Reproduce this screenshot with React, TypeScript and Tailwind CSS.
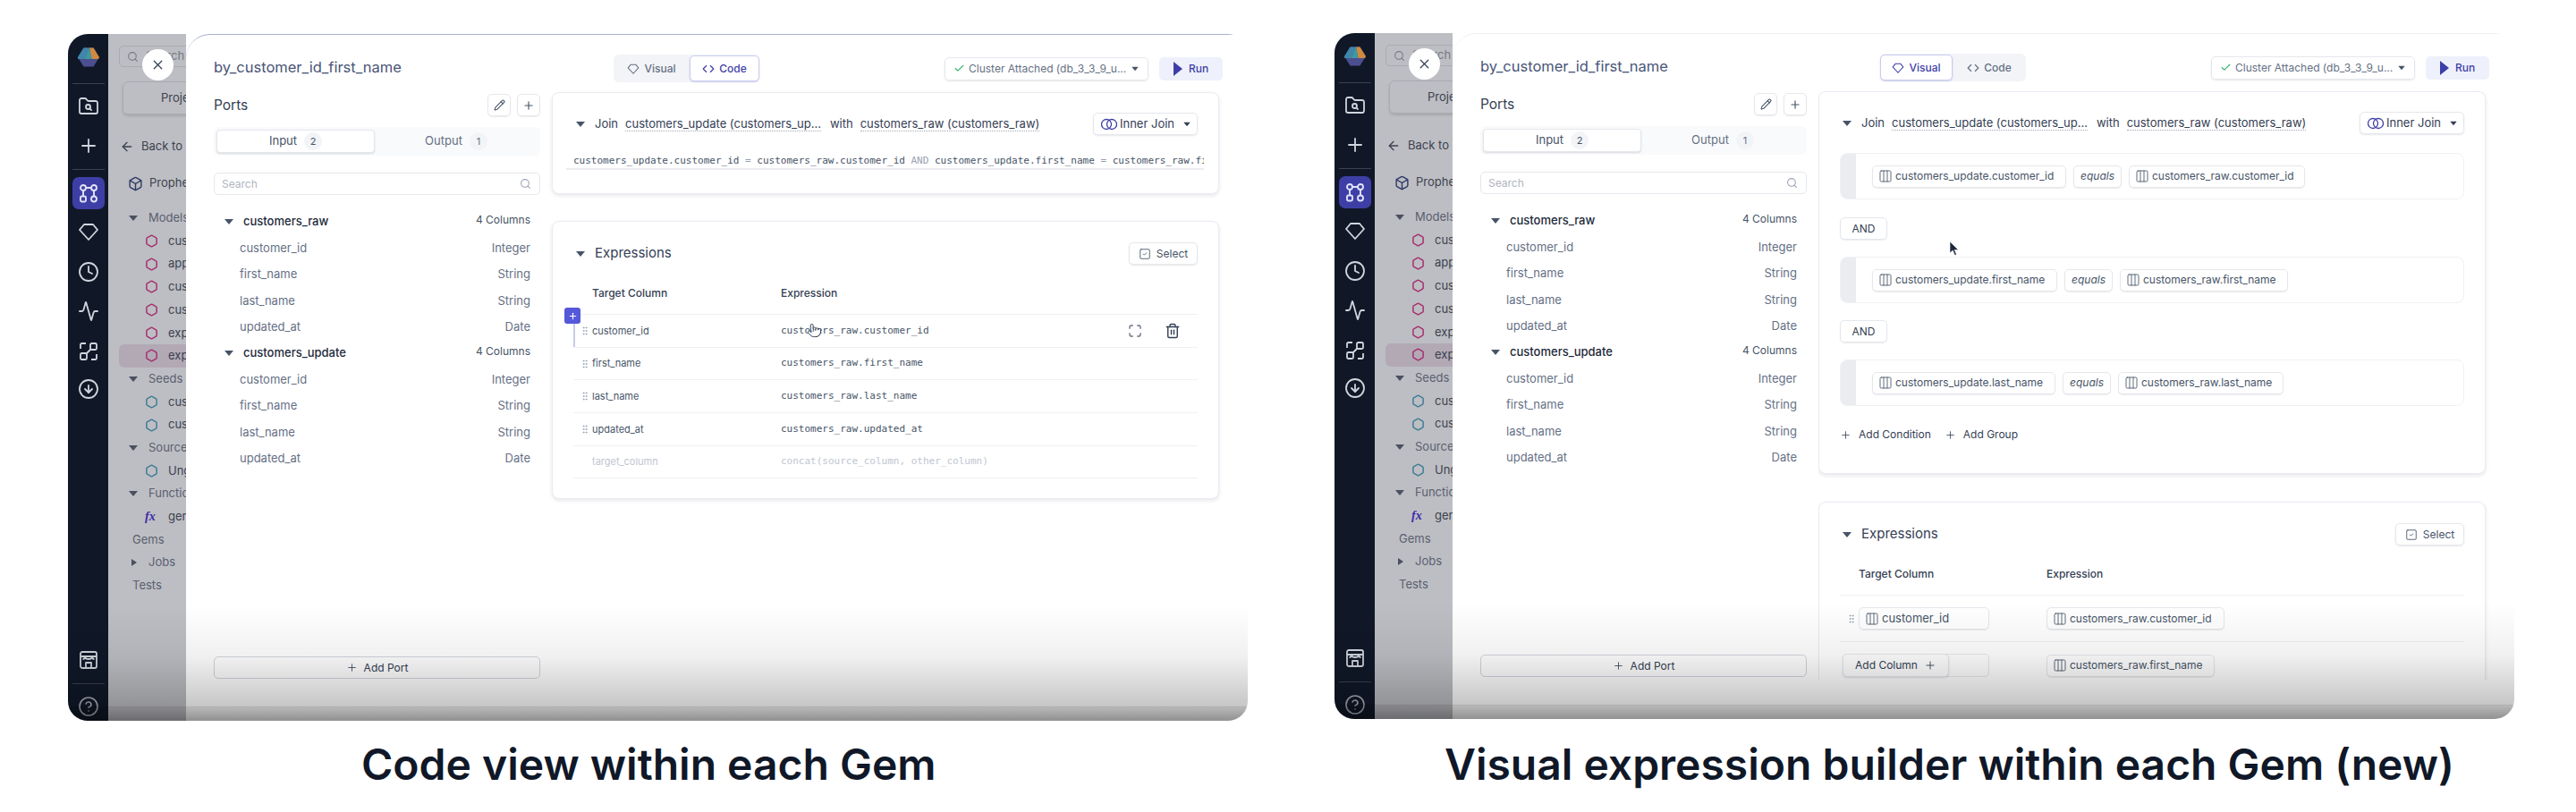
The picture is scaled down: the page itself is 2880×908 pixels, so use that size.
import React from "react";
import {
  X, Pencil, Plus, Search, ArrowLeft, Box, Hexagon, Check, Columns3, Trash2, GripVertical,
  Code, SquareCheck, Clock, Activity, CircleArrowDown, CircleHelp, FolderSearch2, Pointer,
} from "lucide-react";

const Caret = ({ right = false, className = "" }: { right?: boolean; className?: string }) => (
  <svg width="10" height="8" viewBox="0 0 10 8" className={`shrink-0 ${className}`}>
    {right ? <path d="M2 0 L8 4 L2 8 Z" fill="currentColor" /> : <path d="M0 1 H10 L5 7 Z" fill="currentColor" />}
  </svg>
);

const GemIcon = ({ className = "" }: { className?: string }) => (
  <svg width="24" height="24" viewBox="0 0 24 24" fill="none" stroke="currentColor" strokeWidth="1.8" strokeLinejoin="round" className={`shrink-0 ${className}`}>
    <path d="M7 4 H17 L22 10 L12 21 L2 10 Z" />
  </svg>
);

const FlowIcon = ({ className = "" }: { className?: string }) => (
  <svg width="24" height="24" viewBox="0 0 24 24" fill="none" stroke="currentColor" strokeWidth="1.9" className={className}>
    <circle cx="6" cy="6" r="3" />
    <circle cx="18" cy="6" r="3" />
    <rect x="3" y="15.5" width="6" height="6" rx="1.5" />
    <circle cx="18" cy="18.5" r="3" />
    <path d="M9 6 H15 M6 9 V15.5 M18 9 V15.5" />
  </svg>
);

const GraphIcon = ({ className = "" }: { className?: string }) => (
  <svg width="24" height="24" viewBox="0 0 24 24" fill="none" stroke="currentColor" strokeWidth="1.8" strokeLinejoin="round" className={`shrink-0 ${className}`}>
    <rect x="14" y="3" width="7" height="7" rx="1.5" />
    <rect x="3" y="14" width="7" height="7" rx="1.5" />
    <path d="M3 9 V4.5 A1.5 1.5 0 0 1 4.5 3 H9 M21 15 V19.5 A1.5 1.5 0 0 1 19.5 21 H15 M9 15 L15 9" />
  </svg>
);

const StoreIcon = ({ className = "" }: { className?: string }) => (
  <svg width="24" height="24" viewBox="0 0 24 24" fill="none" stroke="currentColor" strokeWidth="1.8" strokeLinejoin="round" className={`shrink-0 ${className}`}>
    <rect x="3" y="3" width="18" height="18" rx="2" />
    <path d="M3 8 H21 M8 8 Q8 11 5.5 11 M8 8 Q8 11 12 11 Q16 11 16 8 M16 8 Q16 11 18.5 11 M9 21 V15 H15 V21" />
  </svg>
);

const Logo = () => (
  <svg width="24" height="24" viewBox="0 0 24 24">
    <path d="M6.5 1.5 H17.5 L24 12 L17.5 22.5 H6.5 L0 12 Z" fill="#4b4f8f" />
    <path d="M6.5 1.5 H13 L9 12 L12 14 L0 14 L0 12 Z" fill="#3f86a8" />
    <path d="M13 1.5 H17.5 L24 12 L23 14 L15.5 14 Z" fill="#cf8a3f" />
    <path d="M13 1.5 L15.5 14 L8 14 Z" fill="#3f9a9f" />
  </svg>
);

const Divider = ({ mt }: { mt: string }) => <div className={`h-px w-9 bg-[#3a4150] shrink-0 ${mt}`} />;

const NavBar = () => (
  <div className="w-[45px] shrink-0 bg-[#101828] flex flex-col items-center text-[#d0d5dd]">
    <div className="mt-[14px]"><Logo /></div>
    <Divider mt="mt-[17px]" />
    <FolderSearch2 size={24} strokeWidth={1.8} className="mt-[13px] shrink-0" />
    <Plus size={24} strokeWidth={1.8} className="mt-[20px] shrink-0" />
    <Divider mt="mt-[14px]" />
    <div className="mt-[8px] w-9 h-9 shrink-0 rounded-[7px] bg-[#3e3fa6] flex items-center justify-center text-[#e0e3f7]"><FlowIcon /></div>
    <GemIcon className="mt-[13px]" />
    <Clock size={24} strokeWidth={1.8} className="mt-[21px] shrink-0" />
    <Activity size={24} strokeWidth={1.8} className="mt-[20px] shrink-0" />
    <GraphIcon className="mt-[21px]" />
    <CircleArrowDown size={24} strokeWidth={1.8} className="mt-[18px] shrink-0" />
    <StoreIcon className="mt-auto" />
    <Divider mt="mt-[14px]" />
    <CircleHelp size={24} strokeWidth={1.6} className="mt-[13px] mb-[4px] shrink-0 text-[#a8adb8]" />
  </div>
);

type TreeRow = { t: string; kind: "head" | "pink" | "teal" | "fx" | "plain" | "closed"; active?: boolean };
const tree: TreeRow[] = [
  { t: "Models", kind: "head" },
  { t: "customers", kind: "pink" },
  { t: "app_users", kind: "pink" },
  { t: "customers", kind: "pink" },
  { t: "customers", kind: "pink" },
  { t: "exports", kind: "pink" },
  { t: "exports", kind: "pink", active: true },
  { t: "Seeds", kind: "head" },
  { t: "customers", kind: "teal" },
  { t: "customers", kind: "teal" },
  { t: "Sources", kind: "head" },
  { t: "Ungrouped", kind: "teal" },
  { t: "Functions", kind: "head" },
  { t: "generate", kind: "fx" },
  { t: "Gems", kind: "plain" },
  { t: "Jobs", kind: "closed" },
  { t: "Tests", kind: "plain" },
];

const ProjectPane = () => (
  <div className="w-[87px] shrink-0 bg-[#bdbec3] overflow-hidden flex flex-col whitespace-nowrap text-[13px] text-[#3c4250]">
    <div className="mt-[13px] ml-[12px] w-[130px] h-[24px] shrink-0 rounded-[5px] border border-[#a9abb2] flex items-center px-[8px] gap-[6px] text-[#767a85]">
      <Search size={13} className="shrink-0" />
      <span className="ml-[2px]">Search</span>
    </div>
    <div className="mt-[16px] ml-[16px] w-[130px] h-[37px] shrink-0 rounded-[6px] border border-[#a9abb2] shadow-[0_2px_3px_rgba(0,0,0,0.12)] flex items-center pl-[42px]">Projects</div>
    <div className="mt-[26px] ml-[13px] h-[20px] shrink-0 flex items-center gap-[8px]"><ArrowLeft size={16} className="shrink-0" /><span>Back to</span></div>
    <div className="mt-[21px] ml-[22px] h-[20px] shrink-0 flex items-center gap-[7px]"><Box size={17} className="shrink-0 text-[#2f3a66]" /><span>Prophecy</span></div>
    <div className="mt-[16px] flex flex-col">
      {tree.map((r, i) => (
        <div key={i} className={`h-[25.7px] shrink-0 flex items-center ${r.active ? "bg-[#b2a9b5] rounded-l-[6px]" : ""} ${r.kind === "pink" || r.kind === "teal" || r.kind === "fx" ? "pl-[29px] ml-[12px]" : ""}`}>
          {r.kind === "head" && <span className="flex items-center text-[#5a6070] pl-[23px] gap-[12px]"><Caret className="text-[#4a5060]" />{r.t}</span>}
          {r.kind === "closed" && <span className="flex items-center text-[#5a6070] pl-[24px] gap-[11px]"><Caret right className="text-[#4a5060]" />{r.t}</span>}
          {r.kind === "plain" && <span className="pl-[27px] text-[#5a6070]">{r.t}</span>}
          {(r.kind === "pink" || r.kind === "teal") && (
            <>
              <Hexagon size={15} strokeWidth={2.4} className={`shrink-0 ${r.kind === "pink" ? "text-[#a5306f]" : "text-[#3f7d95]"}`} />
              <span className="ml-[11px]">{r.t}</span>
            </>
          )}
          {r.kind === "fx" && (
            <>
              <span className="w-[15px] shrink-0 italic font-bold text-[14px] text-[#3f2aa8] font-['Liberation_Serif',serif]">fx</span>
              <span className="ml-[11px]">{r.t}</span>
            </>
          )}
        </div>
      ))}
    </div>
  </div>
);

const cols = [
  ["customer_id", "Integer"],
  ["first_name", "String"],
  ["last_name", "String"],
  ["updated_at", "Date"],
];

const Port = ({ name }: { name: string }) => (
  <>
    <div className="h-[29.4px] flex items-center pl-[12px] pr-[11px]">
      <Caret className="text-[#475467]" />
      <span className="ml-[11px] text-[13px] font-medium text-[#1d2939]">{name}</span>
      <span className="ml-auto text-[12px] text-[#475467] -mt-[4px]">4 Columns</span>
    </div>
    {cols.map(([n, t]) => (
      <div key={n} className="h-[29.4px] flex items-center justify-between pl-[29px] pr-[11px] text-[13px] text-[#667085]">
        <span>{n}</span>
        <span>{t}</span>
      </div>
    ))}
  </>
);

const SmallBtn = ({ children }: { children: React.ReactNode }) => (
  <div className="w-[26px] h-[25px] rounded-[5px] border border-[#e4e7ec] shadow-[0_1px_1px_rgba(16,24,40,0.08)] flex items-center justify-center text-[#475467]">{children}</div>
);

const PortsColumn = () => (
  <div className="w-[365px] shrink-0 flex flex-col mr-[13px] pb-[47px]">
    <div className="mt-[24px] h-[24px] flex items-center text-[16.5px] text-[#4a5578]">by_customer_id_first_name</div>
    <div className="mt-[18px] h-[25px] flex items-center">
      <span className="text-[15.5px] text-[#344054]">Ports</span>
      <div className="ml-auto flex gap-[7px]">
        <SmallBtn><Pencil size={13} /></SmallBtn>
        <SmallBtn><Plus size={14} /></SmallBtn>
      </div>
    </div>
    <div className="mt-[12px] h-[32px] rounded-[6px] bg-[#f9fafb] flex items-center px-[3px] text-[13px]">
      <div className="w-[177px] h-[26px] rounded-[4px] bg-white border border-[#e4e7ec] shadow-[0_1px_2px_rgba(16,24,40,0.14)] flex items-center justify-center gap-[8px] text-[#475467]">
        <span>Input</span>
        <span className="w-[20px] h-[20px] rounded-full bg-[#f2f4f7] flex items-center justify-center text-[11px]">2</span>
      </div>
      <div className="flex-1 flex items-center justify-center gap-[8px] text-[#667085]">
        <span>Output</span>
        <span className="w-[20px] h-[20px] rounded-full bg-[#f2f4f7] flex items-center justify-center text-[11px]">1</span>
      </div>
    </div>
    <div className="mt-[19px] h-[25px] rounded-[5px] border border-[#e4e7ec] flex items-center justify-between pl-[8px] pr-[9px] text-[12px] text-[#b0b5c0]">
      <span>Search</span>
      <Search size={13} className="text-[#98a2b3]" />
    </div>
    <div className="mt-[15.5px]">
      <Port name="customers_raw" />
      <Port name="customers_update" />
    </div>
    <div className="mt-auto h-[25px] rounded-[5px] border border-[#d0d5dd] bg-white flex items-center justify-center gap-[7px] text-[12px] text-[#344054]">
      <Plus size={13} strokeWidth={1.5} />
      <span>Add Port</span>
    </div>
  </div>
);

const Toolbar = ({ mode }: { mode: "code" | "visual" }) => {
  const on = "h-[29px] rounded-[5px] bg-white border border-[#c9cdf0] shadow-[0_1px_2px_rgba(62,63,166,0.2)] flex items-center justify-center gap-[5px] text-[#3e3fa6]";
  const off = "h-[29px] flex items-center justify-center gap-[5px] text-[#667085]";
  return (
    <div className="mt-[22px] h-[31px] flex items-center shrink-0 text-[12px] font-medium">
      <div className="ml-[69px] w-[163px] h-[31px] rounded-[6px] bg-[#f2f4f7] flex items-center">
        <div className={mode === "visual" ? `w-[81px] ${on}` : `w-[85px] ${off}`}><GemIcon className="w-[14px] h-[14px]" /><span>Visual</span></div>
        <div className={mode === "code" ? `w-[78px] ${on}` : `w-[82px] ${off}`}><Code size={14} /><span>Code</span></div>
      </div>
      <div className="ml-[207px] w-[228px] h-[26px] rounded-[5px] border border-[#e4e7ec] shadow-[0_1px_2px_rgba(16,24,40,0.1)] flex items-center pl-[9px] pr-[9px] gap-[4px] font-normal text-[#667085] whitespace-nowrap">
        <Check size={13} className="text-[#32b36b]" />
        <span>Cluster Attached (db_3_3_9_u...</span>
        <Caret className="ml-auto text-[#475467] scale-75" />
      </div>
      <div className="ml-[12px] w-[71px] h-[26px] rounded-[5px] bg-[#eef1fb] flex items-center justify-center gap-[7px] text-[#3e3fa6]">
        <svg width="10" height="16" viewBox="0 0 10 16"><path d="M0 0 L10 8 L0 16 Z" fill="currentColor" /></svg>
        <span>Run</span>
      </div>
    </div>
  );
};

const cardCls = "w-[746px] shrink-0 rounded-[8px] border border-[#e9ebf4] bg-white shadow-[0_2px_4px_rgba(16,24,40,0.1)] px-[23px]";

const JoinHeader = () => (
  <div className="h-[25px] flex items-center text-[13px] text-[#344054] whitespace-nowrap">
    <Caret className="ml-[3px] text-[#475467]" />
    <span className="ml-[11px]">Join</span>
    <span className="ml-[8px] border-b border-dotted border-[#a4a9b6] leading-[16px]">customers_update (customers_up...</span>
    <span className="ml-[10px]">with</span>
    <span className="ml-[8px] border-b border-dotted border-[#a4a9b6] leading-[16px]">customers_raw (customers_raw)</span>
    <div className="ml-auto w-[117px] h-[25px] rounded-[5px] border border-[#e4e7ec] shadow-[0_1px_2px_rgba(16,24,40,0.1)] flex items-center pl-[8px] gap-[3px]">
      <svg width="18" height="16" viewBox="0 0 18 16" fill="none" stroke="#3e3fa6" strokeWidth="1.3"><circle cx="6" cy="8" r="5.5" /><circle cx="12" cy="8" r="5.5" /></svg>
      <span>Inner Join</span>
      <Caret className="ml-[6px] text-[#344054] scale-75" />
    </div>
  </div>
);

const SectionHeader = () => (
  <div className="h-[25px] flex items-center">
    <Caret className="ml-[3px] text-[#475467]" />
    <span className="ml-[11px] text-[15px] text-[#344054]">Expressions</span>
    <div className="ml-auto w-[77px] h-[25px] rounded-[5px] border border-[#e4e7ec] shadow-[0_1px_2px_rgba(16,24,40,0.1)] flex items-center justify-center gap-[6px] text-[12px] text-[#475467]">
      <SquareCheck size={14} strokeWidth={1.5} />
      <span>Select</span>
    </div>
  </div>
);

const rows = [
  ["customer_id", "customers_raw.customer_id"],
  ["first_name", "customers_raw.first_name"],
  ["last_name", "customers_raw.last_name"],
  ["updated_at", "customers_raw.updated_at"],
];

const mono = "font-['DejaVu_Sans_Mono',monospace] text-[11px]";

const CodeBody = () => (
  <>
    <div className={`${cardCls} mt-[11px] h-[114px] pt-[22px] text-[#475467]`}>
      <JoinHeader />
      <div className={`${mono} mt-[21px] h-[18px] -ml-[8px] pl-[8px] w-[713px] whitespace-nowrap overflow-hidden border-b-2 border-[#eaecf0]`}>
        customers_update.customer_id <span className="text-[#98a2b3]">=</span> customers_raw.customer_id <span className="text-[#98a2b3]">AND</span> customers_update.first_name <span className="text-[#98a2b3]">=</span> customers_raw.first_name
      </div>
    </div>
    <div className={`${cardCls} mt-[30px] h-[311px] pt-[23px]`}>
      <SectionHeader />
      <div className="h-[56px] pt-[23px] pl-[21px] flex text-[12px] font-medium text-[#344054] border-b border-[#eef0f4]">
        <span className="w-[211px]">Target Column</span>
        <span>Expression</span>
      </div>
      {rows.map(([a, b], i) => (
        <div key={a} className="relative h-[36.7px] flex items-center border-b border-[#eef0f4] text-[#475467]">
          <GripVertical size={12} className="ml-[5px] w-[16px] shrink-0 text-[#98a2b3]" />
          <span className="w-[211px] text-[11px]">{a}</span>
          <span className={mono}>{b}</span>
          {i === 0 && (
            <>
              <div className="absolute left-0 top-0 bottom-0 w-[2px] bg-[#c7cbe6]" />
              <div className="absolute -left-[10px] -top-[8px] w-[18px] h-[18px] rounded-[3px] bg-[#5558d9] flex items-center justify-center text-white">
                <Plus size={11} strokeWidth={2.5} />
              </div>
              <svg width="18" height="18" viewBox="0 0 24 24" fill="none" stroke="#667085" strokeWidth="1.8" className="ml-auto mr-[24px]">
                <path d="M4 9 V6 A2 2 0 0 1 6 4 H9 M15 4 H18 A2 2 0 0 1 20 6 V9 M20 15 V18 A2 2 0 0 1 18 20 H15 M9 20 H6 A2 2 0 0 1 4 18 V15" />
              </svg>
              <Trash2 size={18} strokeWidth={1.9} className="mr-[19px] text-[#344054]" />
            </>
          )}
        </div>
      ))}
      <div className="h-[36.7px] flex items-center border-b border-[#eef0f4] text-[#c1c5cf]">
        <span className="ml-[21px] w-[211px] text-[11px]">target_column</span>
        <span className={mono}>concat(source_column, other_column)</span>
      </div>
    </div>
  </>
);

const Chip = ({ text, width, icon = true, italic = false }: { text: string; width: string; icon?: boolean; italic?: boolean }) => (
  <div className={`h-[25px] shrink-0 rounded-[5px] border border-[#e4e7ec] bg-white shadow-[0_1px_1px_rgba(16,24,40,0.08)] flex items-center whitespace-nowrap text-[12px] text-[#475467] ${width} ${icon ? "pl-[6px] gap-[3px]" : "justify-center"} ${italic ? "italic" : ""}`}>
    {icon && <Columns3 size={16} strokeWidth={1.3} className="shrink-0" />}
    <span>{text}</span>
  </div>
);

const Condition = ({ a, b, wa, wb, mt }: { a: string; b: string; wa: string; wb: string; mt: string }) => (
  <div className={`h-[52px] rounded-[8px] border border-[#f0f1f5] flex overflow-hidden ${mt}`}>
    <div className="w-[17px] shrink-0 bg-[#eaecf0]" />
    <div className="ml-[18px] flex items-center gap-[8px]">
      <Chip text={a} width={wa} />
      <Chip text="equals" width="w-[54px]" icon={false} italic />
      <Chip text={b} width={wb} />
    </div>
  </div>
);

const AndBtn = ({ mt }: { mt: string }) => (
  <div className={`w-[53px] h-[25px] rounded-[5px] border border-[#e4e7ec] shadow-[0_1px_1px_rgba(16,24,40,0.08)] flex items-center justify-center text-[12px] text-[#344054] ${mt}`}>AND</div>
);

const VisualBody = () => (
  <div className="flex-1 min-h-0 overflow-hidden mb-[44px] mt-[11px] pb-[6px]">
    <div className={`${cardCls} h-[428px] pt-[22px]`}>
      <JoinHeader />
      <Condition mt="mt-[21px]" a="customers_update.customer_id" b="customers_raw.customer_id" wa="w-[217px]" wb="w-[197px]" />
      <AndBtn mt="mt-[20px]" />
      <Condition mt="mt-[19px]" a="customers_update.first_name" b="customers_raw.first_name" wa="w-[207px]" wb="w-[188px]" />
      <AndBtn mt="mt-[19px]" />
      <Condition mt="mt-[19px]" a="customers_update.last_name" b="customers_raw.last_name" wa="w-[205px]" wb="w-[185px]" />
      <div className="mt-[22px] h-[20px] flex items-center text-[12px] text-[#344054]">
        <Plus size={13} strokeWidth={1.5} />
        <span className="ml-[8px]">Add Condition</span>
        <Plus size={13} strokeWidth={1.5} className="ml-[15px]" />
        <span className="ml-[8px]">Add Group</span>
      </div>
    </div>
    <div className={`${cardCls} mt-[31px] h-[400px] pt-[23px]`}>
      <SectionHeader />
      <div className="h-[56px] pt-[23px] pl-[21px] flex text-[12px] font-medium text-[#344054] border-b border-[#eef0f4]">
        <span className="w-[210px]">Target Column</span>
        <span>Expression</span>
      </div>
      <div className="h-[52px] flex items-center border-b border-[#eef0f4]">
        <GripVertical size={12} className="ml-[5px] w-[16px] shrink-0 text-[#98a2b3]" />
        <div className="w-[146px] mr-[64px] h-[25px] rounded-[5px] border border-[#e4e7ec] flex items-center pl-[6px] gap-[3px] text-[13px] text-[#475467] shadow-[0_1px_1px_rgba(16,24,40,0.08)]">
          <Columns3 size={16} strokeWidth={1.3} /><span>customer_id</span>
        </div>
        <Chip text="customers_raw.customer_id" width="w-[199px]" />
      </div>
      <div className="relative h-[52px] flex items-center">
        <div className="ml-[21px] w-[146px] mr-[64px] h-[26px] rounded-[5px] border border-[#e4e7ec]" />
        <Chip text="customers_raw.first_name" width="w-[188px]" />
        <div className="absolute left-[3px] top-[13px] w-[119px] h-[26px] rounded-[5px] border border-[#e4e7ec] bg-white shadow-[0_1px_2px_rgba(16,24,40,0.14)] flex items-center justify-center gap-[7px] text-[12px] text-[#344054]">
          <span>Add Column</span><Plus size={14} strokeWidth={1.5} />
        </div>
      </div>
    </div>
  </div>
);

const Window = ({ mode }: { mode: "code" | "visual" }) => (
  <div className={`relative w-[1319px] shrink-0 flex rounded-[22px] overflow-hidden ${mode === "code" ? "h-[768px] mt-px" : "h-[767px] ml-[97px]"}`}>
    <NavBar />
    <ProjectPane />
    <div className={`flex-1 min-w-0 bg-white rounded-tl-[27px] flex pl-[31px] border-t ${mode === "code" ? "border-[#aab0cc]" : "border-[#eceef3]"}`}>
      <PortsColumn />
      <div className="w-[750px] shrink-0 flex flex-col">
        <Toolbar mode={mode} />
        {mode === "code" ? <CodeBody /> : <VisualBody />}
      </div>
    </div>
    <div className="absolute left-[83px] top-[17px] w-[35px] h-[35px] rounded-full bg-white flex items-center justify-center text-[#344054]">
      <X size={17} strokeWidth={1.8} />
    </div>
    {mode === "code" ? (
      <Pointer size={17} strokeWidth={1.4} fill="#ffffff" className="absolute left-[826px] top-[323px] text-[#344054]" />
    ) : (
      <svg width="12" height="18" viewBox="0 0 12 18" className="absolute left-[687px] top-[232px]">
        <path d="M1 1 V14 L4.2 11 L6.5 16.5 L8.5 15.6 L6.2 10.4 H10.5 Z" fill="#1d2939" stroke="#ffffff" strokeWidth="0.6" />
      </svg>
    )}
    <div className="pointer-events-none absolute inset-x-0 bottom-0 h-[130px] bg-[linear-gradient(to_bottom,rgba(0,0,0,0)_0%,rgba(0,0,0,0.06)_45%,rgba(0,0,0,0.22)_87%,rgba(0,0,0,0.4)_100%)]" />
    <div className="pointer-events-none absolute inset-x-0 bottom-0 h-[16px] bg-black/5 border-t border-black/5" />
  </div>
);

export default function App() {
  return (
    <div className="w-[2880px] h-[908px] bg-white overflow-hidden font-[Inter,sans-serif]">
      <div className="flex items-start pt-[37px] pl-[76px]">
        <Window mode="code" />
        <Window mode="visual" />
      </div>
      <div className="mt-[21px] flex pl-[404px] text-[48px] leading-[56px] font-semibold text-[#101828] whitespace-nowrap">
        <span className="w-[1211px]">Code view within each Gem</span>
        <span>Visual expression builder within each Gem (new)</span>
      </div>
    </div>
  );
}
